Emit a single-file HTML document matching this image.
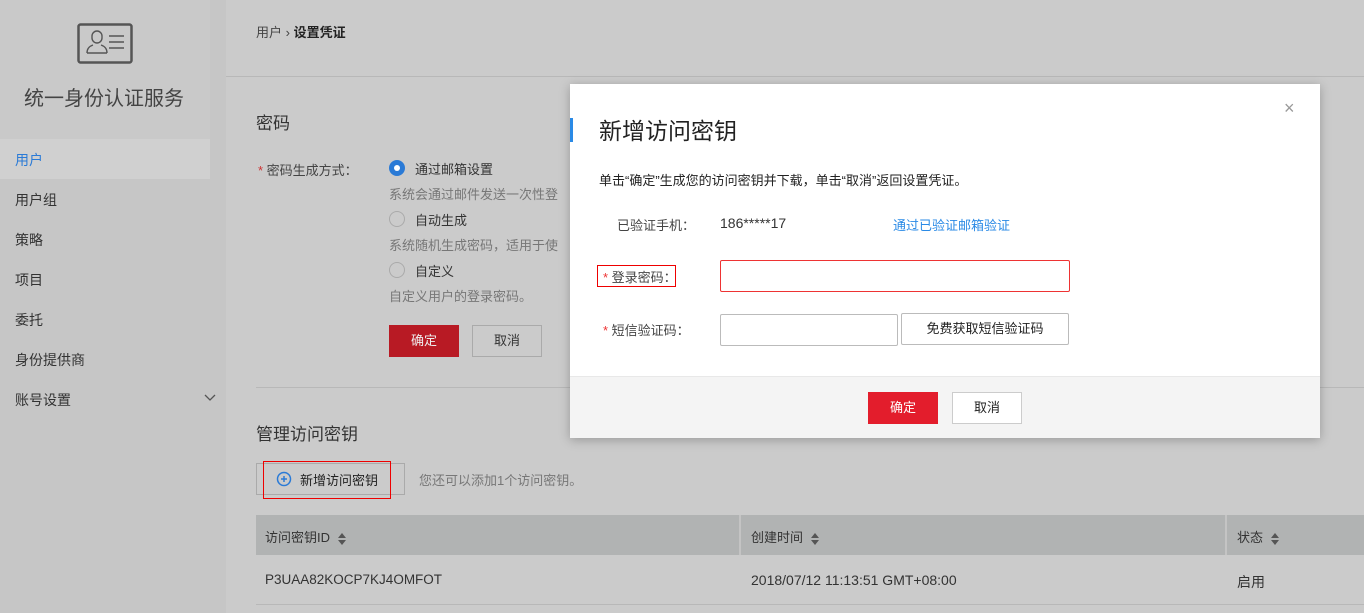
<!DOCTYPE html>
<html><head><meta charset="utf-8"><style>
*{margin:0;padding:0;box-sizing:border-box}
body{width:1364px;height:613px;overflow:hidden;background:#cbcbcb;font-family:"Liberation Sans","Noto Sans CJK SC",sans-serif;font-size:13px;color:#333;position:relative}
.a{position:absolute;white-space:nowrap}
.side{position:absolute;left:0;top:0;width:226px;height:613px;background:#c6c6c6}
.logo{position:absolute;left:0;top:0;width:210px;height:139px;background:#c9c9c9}
.nav{position:absolute;left:15px;font-size:14px;color:#333}
.btn{position:absolute;border:1px solid #aaa;text-align:center;font-size:13px}
.srt{display:inline-block;vertical-align:middle;margin-left:8px;width:8px;height:12px;position:relative}
.srt:before{content:"";position:absolute;left:0;top:0;border:4px solid transparent;border-bottom:5px solid #555;border-top:0}
.srt:after{content:"";position:absolute;left:0;top:7px;border:4px solid transparent;border-top:5px solid #555;border-bottom:0}
</style></head><body>
<div class="side"></div>
<div class="logo"></div>
<div class="a" style="left:0;top:139px;width:210px;height:40px;background:#d0d0d0"></div>
<svg class="a" style="left:76px;top:22px" width="60" height="44"><rect x="2.5" y="2.5" width="53" height="38" rx="2" fill="none" stroke="#555" stroke-width="2.5"/><path d="M16 14 a5 5 0 0 1 10 0 v2 a5 5 0 0 1 -10 0z M11 31 q0 -6 6 -8 M31 31 q0 -6 -6 -8 M11 31 H31" fill="none" stroke="#555" stroke-width="1.4"/><path d="M33 14H48M33 20H48M33 26H48" stroke="#555" stroke-width="1.4"/></svg>
<div class="a" style="left:24px;top:82px;font-size:20px;color:#444">统一身份认证服务</div>
<div class="nav a" style="top:150px;color:#2a7ad6">用户</div>
<div class="nav a" style="top:190px">用户组</div>
<div class="nav a" style="top:230px">策略</div>
<div class="nav a" style="top:270px">项目</div>
<div class="nav a" style="top:310px">委托</div>
<div class="nav a" style="top:350px">身份提供商</div>
<div class="nav a" style="top:390px">账号设置</div>
<svg class="a" style="left:204px;top:394px" width="12" height="8"><path d="M1 1L6 6L11 1" fill="none" stroke="#555" stroke-width="1.3"/></svg>
<div class="a" style="left:226px;top:76px;width:1138px;height:1px;background:#b8b8b8"></div>
<div class="a" style="left:256px;top:22px;font-size:13px;color:#444">用户 › <b style="color:#222">设置凭证</b></div>
<div class="a" style="left:256px;top:109px;font-size:17px;color:#333">密码</div>
<div class="a" style="left:258px;top:160px;font-size:13px;color:#444"><span style="color:#c33">*</span> 密码生成方式：</div>
<div class="a" style="left:389px;top:160px;width:16px;height:16px;border-radius:50%;background:#2a7ad6"><div style="margin:5px;width:6px;height:6px;border-radius:50%;background:#fff"></div></div>
<div class="a" style="left:415px;top:159px;font-size:13px">通过邮箱设置</div>
<div class="a" style="left:389px;top:184px;color:#777">系统会通过邮件发送一次性登</div>
<div class="a" style="left:389px;top:211px;width:16px;height:16px;border-radius:50%;border:1px solid #aaa"></div>
<div class="a" style="left:415px;top:210px">自动生成</div>
<div class="a" style="left:389px;top:235px;color:#777">系统随机生成密码，适用于使</div>
<div class="a" style="left:389px;top:262px;width:16px;height:16px;border-radius:50%;border:1px solid #aaa"></div>
<div class="a" style="left:415px;top:261px">自定义</div>
<div class="a" style="left:389px;top:286px;color:#777">自定义用户的登录密码。</div>
<div class="btn" style="left:389px;top:325px;width:70px;height:32px;line-height:30px;background:#b81a24;border-color:#b81a24;color:#eee">确定</div>
<div class="btn" style="left:472px;top:325px;width:70px;height:32px;line-height:30px;background:#cbcbcb">取消</div>
<div class="a" style="left:256px;top:387px;width:1108px;height:1px;background:#b8b8b8"></div>
<div class="a" style="left:256px;top:420px;font-size:17px;color:#333">管理访问密钥</div>
<div class="btn" style="left:256px;top:463px;width:149px;height:32px;background:#cbcbcb"></div>
<div class="a" style="left:263px;top:461px;width:128px;height:38px;border:1px solid #e00"></div>
<svg class="a" style="left:276px;top:471px" width="16" height="16"><circle cx="8" cy="8" r="6.5" fill="none" stroke="#2a7ad6" stroke-width="1.5"/><path d="M5 8H11M8 5V11" stroke="#2a7ad6" stroke-width="1.5"/></svg>
<div class="a" style="left:300px;top:470px;color:#222">新增访问密钥</div>
<div class="a" style="left:419px;top:470px;color:#777">您还可以添加1个访问密钥。</div>
<div class="a" style="left:256px;top:515px;width:1108px;height:40px;background:#b1b3b3"></div>
<div class="a" style="left:739px;top:515px;width:2px;height:40px;background:#c4c4c4"></div>
<div class="a" style="left:1225px;top:515px;width:2px;height:40px;background:#c4c4c4"></div>
<div class="a" style="left:265px;top:527px">访问密钥ID<span class="srt"></span></div>
<div class="a" style="left:751px;top:527px">创建时间<span class="srt"></span></div>
<div class="a" style="left:1237px;top:527px">状态<span class="srt"></span></div>
<div class="a" style="left:265px;top:572px;font-size:13.5px">P3UAA82KOCP7KJ4OMFOT</div>
<div class="a" style="left:751px;top:572px;font-size:14px">2018/07/12 11:13:51 GMT+08:00</div>
<div class="a" style="left:1237px;top:572px;font-size:14px">启用</div>
<div class="a" style="left:256px;top:604px;width:1108px;height:1px;background:#b8b8b8"></div>

<div class="a" style="left:570px;top:84px;width:750px;height:354px;background:#fff;box-shadow:0 2px 10px rgba(0,0,0,.25)">
<div class="a" style="left:0;top:34px;width:3px;height:24px;background:#2a8ae6"></div>
<div class="a" style="left:29px;top:28px;font-size:23px;color:#222">新增访问密钥</div>
<div class="a" style="left:714px;top:14px;font-size:18px;color:#999">×</div>
<div class="a" style="left:29px;top:86px;font-size:13px;color:#222">单击“确定”生成您的访问密钥并下载，单击“取消”返回设置凭证。</div>
<div class="a" style="left:47px;top:131px;color:#444">已验证手机：</div>
<div class="a" style="left:150px;top:131px;color:#333;font-size:14px">186*****17</div>
<div class="a" style="left:323px;top:131px;color:#2a8ae6">通过已验证邮箱验证</div>
<div class="a" style="left:27px;top:181px;width:79px;height:22px;border:1px solid #e00"></div>
<div class="a" style="left:33px;top:183px;color:#444"><span style="color:#e33">*</span> 登录密码：</div>
<div class="a" style="left:150px;top:176px;width:350px;height:32px;border:1px solid #e33;border-radius:2px"></div>
<div class="a" style="left:33px;top:236px;color:#444"><span style="color:#e33">*</span> 短信验证码：</div>
<div class="a" style="left:150px;top:230px;width:178px;height:32px;border:1px solid #bbb;border-radius:2px"></div>
<div class="a" style="left:331px;top:229px;width:168px;height:32px;border:1px solid #bbb;border-radius:2px;text-align:center;line-height:30px;color:#222">免费获取短信验证码</div>
<div class="a" style="left:0;top:292px;width:750px;height:62px;background:#f4f4f4;border-top:1px solid #e8e8e8"></div>
<div class="btn" style="left:298px;top:308px;width:70px;height:32px;line-height:30px;background:#e31d2c;border-color:#e31d2c;color:#fff">确定</div>
<div class="btn" style="left:382px;top:308px;width:70px;height:32px;line-height:30px;background:#fff;border-color:#ccc;color:#222">取消</div>
</div>
</body></html>
